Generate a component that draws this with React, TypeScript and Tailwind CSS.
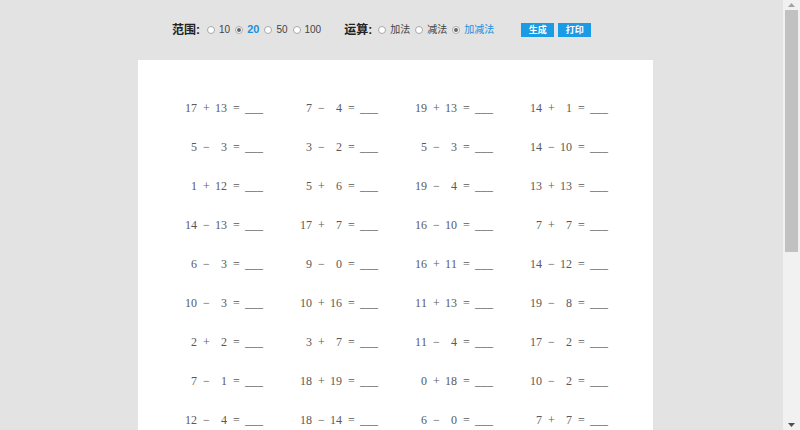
import React from 'react';

const rows: [number, string, number][][] = [
  [[17, '+', 13], [7, '-', 4], [19, '+', 13], [14, '+', 1]],
  [[5, '-', 3], [3, '-', 2], [5, '-', 3], [14, '-', 10]],
  [[1, '+', 12], [5, '+', 6], [19, '-', 4], [13, '+', 13]],
  [[14, '-', 13], [17, '+', 7], [16, '-', 10], [7, '+', 7]],
  [[6, '-', 3], [9, '-', 0], [16, '+', 11], [14, '-', 12]],
  [[10, '-', 3], [10, '+', 16], [11, '+', 13], [19, '-', 8]],
  [[2, '+', 2], [3, '+', 7], [11, '-', 4], [17, '-', 2]],
  [[7, '-', 1], [18, '+', 19], [0, '+', 18], [10, '-', 2]],
  [[12, '-', 4], [18, '-', 14], [6, '-', 0], [7, '+', 7]],
  [[15, '+', 3], [9, '+', 9], [20, '-', 6], [4, '+', 11]],
  [[13, '-', 5], [8, '+', 12], [3, '+', 3], [16, '-', 9]],
  [[11, '+', 6], [19, '-', 19], [12, '+', 5], [8, '-', 7]],
  [[20, '-', 10], [6, '+', 14], [18, '-', 3], [2, '+', 17]],
  [[9, '+', 4], [15, '-', 7], [1, '+', 1], [13, '-', 6]],
  [[4, '+', 15], [17, '-', 9], [10, '+', 10], [5, '+', 8]],
];

const pad = (n: number) => (n < 10 ? ' ' + n : String(n));

function Radio({ checked }: { checked?: boolean }) {
  return (
    <span className="inline-flex items-center justify-center w-[8px] h-[8px] rounded-full border border-[#a8a8a8] bg-white mr-[4px]">
      {checked && <span className="w-[4px] h-[4px] rounded-full bg-[#666]" />}
    </span>
  );
}

function Option({ label, checked, bold }: { label: string; checked?: boolean; bold?: boolean }) {
  return (
    <label className="inline-flex items-center mr-[5px] text-[10px]">
      <Radio checked={checked} />
      <span className={checked ? (bold ? 'text-[#1e8fdc] font-bold text-[11px]' : 'text-[#1e8fdc]') : 'text-[#444]'}>{label}</span>
    </label>
  );
}

function Equation({ a, op, b }: { a: number; op: string; b: number }) {
  const chars = `${pad(a)} ${op} ${pad(b)} = `.split('');
  return (
    <div className="flex items-baseline">
      {chars.map((c, i) => (
        <span key={i} className="inline-block w-[6px] text-center">
          {c === '-' ? '−' : c === ' ' ? '\u00a0' : c}
        </span>
      ))}
      <span>___</span>
    </div>
  );
}

function ScrollBar() {
  return (
    <div className="w-[17px] h-screen shrink-0 bg-[#f1f1f1] flex flex-col items-center">
      <div className="h-[10px] flex items-center justify-center">
        <svg width="7" height="4" viewBox="0 0 7 4"><path d="M0 4 L3.5 0 L7 4 Z" fill="#a3a3a3" /></svg>
      </div>
      <div className="w-[13px] h-[242px] bg-[#c1c1c1]" />
      <div className="flex-1" />
      <div className="h-[10px] flex items-center justify-center">
        <svg width="7" height="4" viewBox="0 0 7 4"><path d="M0 0 L3.5 4 L7 0 Z" fill="#505050" /></svg>
      </div>
    </div>
  );
}

export default function App() {
  return (
    <div
      className="h-screen overflow-hidden flex bg-[#e3e3e3]"
      style={{ fontFamily: '"Liberation Sans", "Noto Sans CJK SC", sans-serif' }}
    >
      <div className="flex-1 flex justify-center items-start pl-[8px]">
        <div className="w-[515px]">
          {/* Toolbar */}
          <div className="flex items-center h-[60px] pl-[34px] pb-[1px]">
            <span className="font-bold text-[12px] text-[#222] mr-[7px]">范围:</span>
            <Option label="10" />
            <Option label="20" checked bold />
            <Option label="50" />
            <Option label="100" />
            <span className="font-bold text-[12px] text-[#222] ml-[18px] mr-[6px]">运算:</span>
            <Option label="加法" />
            <Option label="减法" />
            <Option label="加减法" checked />
            <div className="flex gap-[4px] ml-[22px]">
              <button className="w-[33px] h-[14px] bg-[#1a9be6] text-white text-[9px] font-bold leading-[14px]">生成</button>
              <button className="w-[33px] h-[14px] bg-[#1a9be6] text-white text-[9px] font-bold leading-[14px]">打印</button>
            </div>
          </div>

          {/* Worksheet */}
          <div className="bg-white pl-[47px] pt-[28px] pb-[30px] text-[12px] text-[#5a5a5a]" style={{ fontFamily: '"Liberation Serif", serif' }}>
            {rows.map((row, r) => (
              <div key={r} className="flex h-[39px] items-center">
                {row.map(([a, op, b], c) => (
                  <div key={c} className="w-[115px]">
                    <Equation a={a} op={op} b={b} />
                  </div>
                ))}
              </div>
            ))}
          </div>
        </div>
      </div>
      <ScrollBar />
    </div>
  );
}
